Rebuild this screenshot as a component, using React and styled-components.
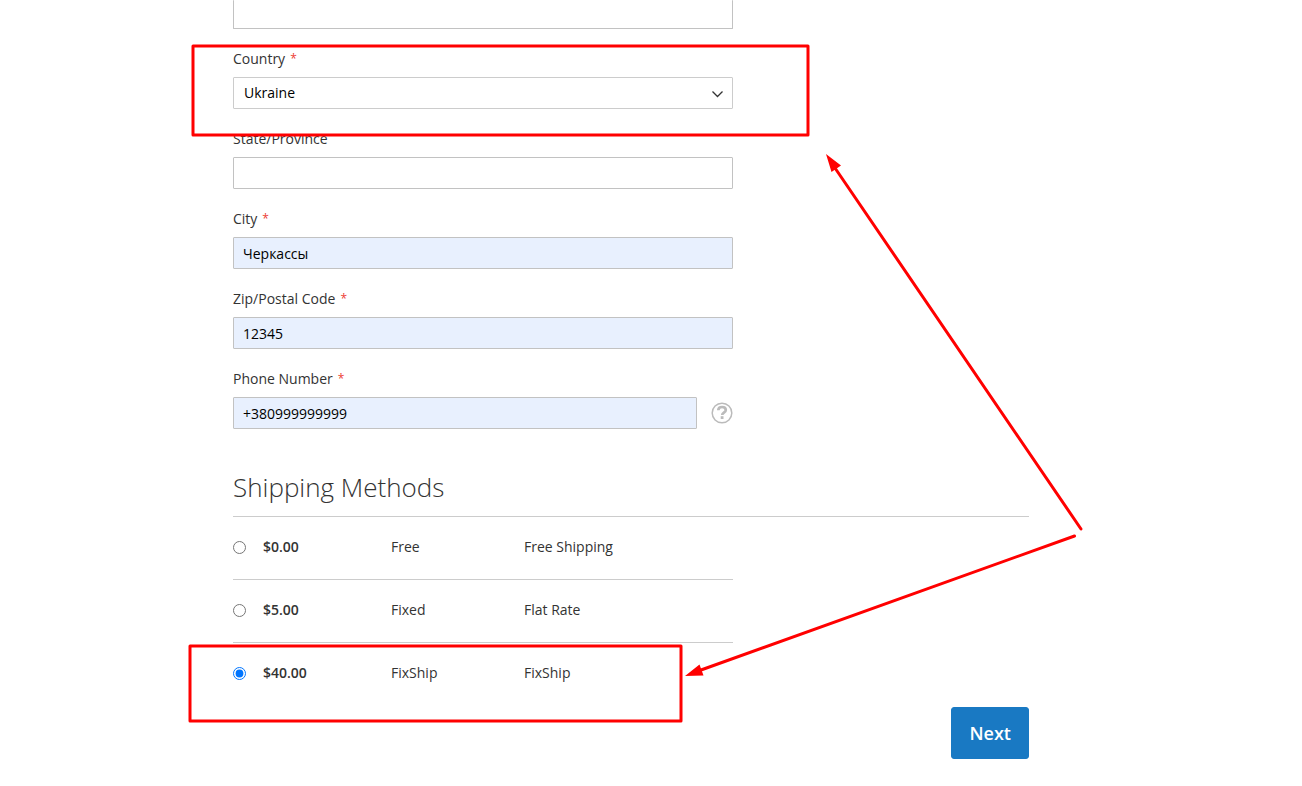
import React, { useState } from "react";
import styled, { createGlobalStyle } from "styled-components";

const GlobalStyle = createGlobalStyle`
  *, *::before, *::after { box-sizing: border-box; }
  body {
    margin: 0;
    background: #fff;
    color: #333;
    font: 400 14px/20px "Open Sans", "Noto Sans", sans-serif;
  }
`;

const Page = styled.main`
  position: relative;
  min-height: 100vh;
  padding: 0 24px 24px 233px;
  overflow: hidden;
`;

const Content = styled.form`
  max-width: 796px;
`;

const Fields = styled.div`
  display: flex;
  flex-direction: column;
  gap: 20px;
  max-width: 500px;
`;

const Field = styled.div`
  display: flex;
  flex-direction: column;
  gap: 8px;
`;

const Label = styled.label`
  display: flex;
  gap: 5px;
`;

const Required = styled.span`
  color: #ed3b34;
  font-size: 12px;
`;

const Control = styled.div`
  display: flex;
  align-items: center;
  gap: 14px;
`;

const TextInput = styled.input`
  flex: 1;
  min-width: 0;
  height: 32px;
  margin: 0;
  padding: 1px 9px 0;
  border: 1px solid #c2c2c2;
  border-radius: 1px;
  background: ${(p) => (p.$filled ? "#e8f0fe" : "#fff")};
  color: #000;
  font: inherit;
`;

const ScrolledInput = styled(TextInput)`
  flex: none;
  height: 29px;
  border-top: 0;
`;

const SelectControl = styled.div`
  display: grid;
  align-items: center;

  > * { grid-area: 1 / 1; }
`;

const Select = styled.select`
  appearance: none;
  width: 100%;
  height: 32px;
  margin: 0;
  padding: 0 30px 0 10px;
  border: 1px solid #ccc;
  border-radius: 1px;
  background: #fff;
  color: #000;
  font: inherit;
`;

const Chevron = styled.svg`
  justify-self: end;
  margin: 2px 10px 0 0;
  pointer-events: none;
`;

const HelpButton = styled.button`
  display: flex;
  padding: 0;
  border: 0;
  background: none;
  cursor: pointer;
`;

const Heading = styled.h2`
  margin: 42px 0 0;
  padding-bottom: 13px;
  border-bottom: 1px solid #ccc;
  font-size: 26px;
  font-weight: 300;
  line-height: 32px;
`;

const Methods = styled.table`
  width: 100%;
  max-width: 500px;
  table-layout: fixed;
  border-collapse: separate;
  border-spacing: 0;
`;

const Column = styled.col`
  width: ${(p) => p.$width};
`;

const MethodRow = styled.tr`
  &:not(:last-child) > td { border-bottom: 1px solid #ccc; }
`;

const Cell = styled.td`
  padding: 20px 0 22px;
  font-weight: ${(p) => (p.$strong ? 600 : 400)};
`;

const Radio = styled.input`
  display: block;
  width: 13px;
  height: 13px;
  margin: 1px 0 0;
`;

const Actions = styled.div`
  display: flex;
  justify-content: flex-end;
  margin-top: 2px;
`;

const PrimaryButton = styled.button`
  height: 52px;
  padding: 0 17px;
  border: 1px solid #1979c3;
  border-radius: 3px;
  background: #1979c3;
  color: #fff;
  font: inherit;
  font-size: 18px;
  font-weight: 600;
  cursor: pointer;
`;

const Annotations = styled.svg`
  position: absolute;
  top: 0;
  left: 0;
  pointer-events: none;
`;

const methods = [
  { id: "free", price: "$0.00", method: "Free", carrier: "Free Shipping" },
  { id: "flat", price: "$5.00", method: "Fixed", carrier: "Flat Rate" },
  { id: "fixship", price: "$40.00", method: "FixShip", carrier: "FixShip" },
];

function FieldLabel({ id, required, children }) {
  return (
    <Label htmlFor={id}>
      {children}
      {required && <Required>*</Required>}
    </Label>
  );
}

function TextField({ id, label, required, value = "", children }) {
  return (
    <Field>
      <FieldLabel id={id} required={required}>{label}</FieldLabel>
      <Control>
        <TextInput id={id} type="text" defaultValue={value} $filled={value !== ""} />
        {children}
      </Control>
    </Field>
  );
}

export default function App() {
  const [selected, setSelected] = useState("fixship");

  return (
    <>
      <GlobalStyle />
      <Page>
        <Content onSubmit={(e) => e.preventDefault()}>
          <Fields>
            <ScrolledInput type="text" aria-label="Street Address" />
            <Field>
              <FieldLabel id="country" required>Country</FieldLabel>
              <SelectControl>
                <Select id="country" defaultValue="UA">
                  <option value="UA">Ukraine</option>
                </Select>
                <Chevron width="11" height="8" viewBox="0 0 11 8" fill="none" aria-hidden="true">
                  <path d="M.5 1.500 5.500 6.500 10.500 1.500" stroke="#333" strokeWidth="1.3" />
                </Chevron>
              </SelectControl>
            </Field>
            <TextField id="region" label="State/Province" />
            <TextField id="city" label="City" required value="Черкассы" />
            <TextField id="zip" label="Zip/Postal Code" required value="12345" />
            <TextField id="phone" label="Phone Number" required value="+380999999999">
              <HelpButton type="button" aria-label="Help">
                <svg width="22" height="22" viewBox="0 0 22 22" fill="none" stroke="#bbb" aria-hidden="true">
                  <circle cx="11" cy="11" r="9.8" strokeWidth="1.5" />
                  <path d="M7.300 8.200C7.400 5.900 8.900 5 11 5s3.800 1 3.800 3c0 2.700-3.600 2.700-3.600 5" strokeWidth="2.700" />
                  <path d="M11.100 14.200v2.800" strokeWidth="2.800" />
                </svg>
              </HelpButton>
            </TextField>
          </Fields>

          <Heading>Shipping Methods</Heading>
          <Methods>
            <colgroup>
              <Column $width="6%" />
              <Column $width="25.6%" />
              <Column $width="26.6%" />
              <Column />
            </colgroup>
            <tbody>
              {methods.map((m) => (
                <MethodRow key={m.id}>
                  <Cell>
                    <Radio
                      type="radio"
                      name="shipping"
                      aria-labelledby={`${m.id}-price ${m.id}-method`}
                      checked={selected === m.id}
                      onChange={() => setSelected(m.id)}
                    />
                  </Cell>
                  <Cell $strong id={`${m.id}-price`}>{m.price}</Cell>
                  <Cell id={`${m.id}-method`}>{m.method}</Cell>
                  <Cell>{m.carrier}</Cell>
                </MethodRow>
              ))}
            </tbody>
          </Methods>
          <Actions>
            <PrimaryButton type="submit">Next</PrimaryButton>
          </Actions>
        </Content>

        <Annotations width="1100" height="740" fill="none" stroke="#f00" strokeWidth="3" strokeLinejoin="round" aria-hidden="true">
          <rect x="193" y="46" width="615" height="89" />
          <rect x="190" y="646" width="491" height="75" />
          <path d="M1081 529 835 168M1074.500 536 701 670" strokeLinecap="round" />
          <path d="M826 154 841 165.500 831.500 172ZM685 676 699.500 664.500 703.500 675.500Z" fill="#f00" stroke="none" />
        </Annotations>
      </Page>
    </>
  );
}
